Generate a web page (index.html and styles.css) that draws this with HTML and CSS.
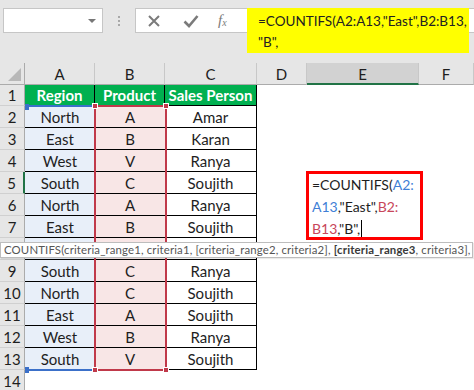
FILE: index.html
```html
<!DOCTYPE html>
<html>
<head>
<meta charset="utf-8">
<link rel="stylesheet" href="styles.css">
</head>
<body>
<div class="app">
  <div class="toolbar">
    <div class="namebox"><span class="caret"></span></div>
    <div class="dots"><i></i><i></i><i></i></div>
    <div class="fbar">
      <div class="ficons">
        <svg class="ico" width="14" height="14" viewBox="0 0 14 14"><path d="M2 2 L12 12 M12 2 L2 12" stroke="#7b7b7b" stroke-width="2" fill="none"/></svg>
        <svg class="ico" width="16" height="14" viewBox="0 0 16 14"><path d="M1.5 7.5 L6 12 L14.5 2" stroke="#7b7b7b" stroke-width="2.6" fill="none"/></svg>
        <span class="fx">f<sub>x</sub></span>
      </div>
      <div class="formula">=COUNTIFS(A2:A13,"East",B2:B13,<br>"B",</div>
    </div>
  </div>

  <div class="sheet">
    <div class="grid">
      <div class="corner"><span class="tri"></span></div>
      <div class="ch">A</div><div class="ch">B</div><div class="ch">C</div><div class="ch">D</div><div class="ch sel">E</div><div class="ch">F</div>

      <div class="rh">1</div><div class="hd">Region</div><div class="hd">Product</div><div class="hd last">Sales Person</div><div class="e"></div><div class="e"></div><div class="e"></div>
      <div class="rh">2</div><div class="c ca">North</div><div class="c cb">A</div><div class="c cc">Amar</div><div class="e"></div><div class="e"></div><div class="e"></div>
      <div class="rh">3</div><div class="c ca">East</div><div class="c cb">B</div><div class="c cc">Karan</div><div class="e"></div><div class="e"></div><div class="e"></div>
      <div class="rh">4</div><div class="c ca">West</div><div class="c cb">V</div><div class="c cc">Ranya</div><div class="e"></div><div class="e"></div><div class="e"></div>
      <div class="rh act">5</div><div class="c ca">South</div><div class="c cb">C</div><div class="c cc">Soujith</div><div class="e"></div><div class="e"></div><div class="e"></div>
      <div class="rh">6</div><div class="c ca">North</div><div class="c cb">A</div><div class="c cc">Ranya</div><div class="e"></div><div class="e"></div><div class="e"></div>
      <div class="rh">7</div><div class="c ca">East</div><div class="c cb">B</div><div class="c cc">Soujith</div><div class="e"></div><div class="e"></div><div class="e"></div>
      <div class="rh"></div><div class="c ca"></div><div class="c cb"></div><div class="c cc"></div><div class="e"></div><div class="e"></div><div class="e"></div>
      <div class="rh">9</div><div class="c ca">South</div><div class="c cb">C</div><div class="c cc">Ranya</div><div class="e"></div><div class="e"></div><div class="e"></div>
      <div class="rh">10</div><div class="c ca">North</div><div class="c cb">C</div><div class="c cc">Soujith</div><div class="e"></div><div class="e"></div><div class="e"></div>
      <div class="rh">11</div><div class="c ca">East</div><div class="c cb">A</div><div class="c cc">Soujith</div><div class="e"></div><div class="e"></div><div class="e"></div>
      <div class="rh">12</div><div class="c ca">West</div><div class="c cb">B</div><div class="c cc">Ranya</div><div class="e"></div><div class="e"></div><div class="e"></div>
      <div class="rh">13</div><div class="c ca">South</div><div class="c cb">V</div><div class="c cc">Soujith</div><div class="e"></div><div class="e"></div><div class="e"></div>
      <div class="rh">14</div><div class="e"></div><div class="e"></div><div class="e"></div><div class="e"></div><div class="e"></div><div class="e"></div>
    </div>

    <div class="range-a"><span class="h h-tl"></span><span class="h h-bl"></span></div>
    <div class="range-b"><span class="h h-tl"></span><span class="h h-tr"></span><span class="h h-bl"></span><span class="h h-br"></span></div>

    <div class="editor">=COUNTIFS(<span class="ref-a">A2:</span><br><span class="ref-a">A13</span>,"East",<span class="ref-b">B2:</span><br><span class="ref-b">B13</span>,"B",<span class="cursor"></span></div>

    <div class="tip">COUNTIFS(criteria_range1, criteria1, [criteria_range2, criteria2], <b>[criteria_range3</b>, criteria3],</div>
  </div>
</div>
</body>
</html>
```

FILE: styles.css
```css
* { box-sizing: border-box; }
html, body { margin: 0; padding: 0; }
body {
  width: 474px;
  height: 390px;
  overflow: hidden;
  background: #fff;
  font-family: Lato, "Open Sans", sans-serif;
}
.app { width: 474px; height: 390px; overflow: hidden; }

.toolbar {
  height: 63px;
  background: #e6e6e6;
  display: flex;
  align-items: flex-start;
  padding-top: 8px;
  padding-left: 3px;
}
.namebox {
  width: 100px;
  height: 25px;
  background: #fff;
  border: 1px solid #c6c6c6;
  position: relative;
}
.caret {
  position: absolute;
  right: 6px;
  top: 10px;
  width: 0; height: 0;
  border-left: 4px solid transparent;
  border-right: 4px solid transparent;
  border-top: 4px solid #777;
}
.dots {
  width: 32px;
  height: 25px;
  display: flex;
  flex-direction: column;
  align-items: center;
  justify-content: center;
  gap: 2px;
}
.dots i {
  display: block;
  width: 2px; height: 2px;
  background: #a8a8a8;
}
.fbar {
  flex: 1;
  height: 25px;
  background: #fff;
  border: 1px solid #c6c6c6;
  border-right: none;
  display: flex;
  align-items: flex-start;
}
.ficons {
  width: 111px;
  height: 23px;
  display: flex;
  align-items: center;
  padding-left: 11px;
}
.ico { display: block; }
.ficons .ico:nth-child(1) { margin-right: 22px; }
.ficons .ico:nth-child(2) { margin-right: 19px; }
.fx {
  font-family: "Liberation Serif", "DejaVu Serif", serif;
  font-style: italic;
  color: #7b7b7b;
  font-size: 15px;
  line-height: 1;
}
.fx sub { font-size: 10px; vertical-align: -1px; }
.formula {
  width: 222px;
  height: 45px;
  margin-top: -1px;
  background: #ffff00;
  padding: 3px 0 0 11px;
  font-size: 13.5px;
  line-height: 21px;
  color: #222;
  white-space: nowrap;
}

.sheet { position: relative; }
.grid {
  display: grid;
  grid-template-columns: 25px 70px 70px 92px 50px 112px 1fr;
  grid-template-rows: 22px 21px repeat(13, 22px);
}
.grid > div {
  display: flex;
  align-items: center;
  justify-content: center;
  font-size: 15px;
  color: #1e1e1e;
  white-space: nowrap;
}
.corner {
  background: #e6e6e6;
  border-right: 1px solid #ababab;
  border-bottom: 1px solid #ababab;
  position: relative;
}
.tri {
  position: absolute;
  right: 3px;
  bottom: 3px;
  width: 0; height: 0;
  border-left: 13px solid transparent;
  border-bottom: 13px solid #b8b8b8;
}
.ch {
  background: #e6e6e6;
  border-right: 1px solid #c8c8c8;
  border-bottom: 1px solid #ababab;
  padding-top: 1px;
}
.ch.sel {
  background: #d2d2d2;
  border-bottom: 2px solid #217346;
}
.rh {
  background: #e6e6e6;
  border-right: 1px solid #ababab;
  border-bottom: 1px solid #d0d0d0;
}
.rh.act { border-right: 2px solid #217346; }
.hd {
  background: #00b050;
  color: #fff !important;
  font-weight: 700;
  border-right: 1px solid #000;
  border-bottom: 1px solid #000;
}
.c {
  border-bottom: 1px solid #000;
}
.ca { background: #e8eff9; }
.cb { background: #f8e6e6; }
.cc { background: #fff; border-right: 1px solid #000; }
.e { background: #fff; }

.range-a {
  position: absolute;
  left: 25px;
  top: 42px;
  width: 70px;
  height: 266px;
  border-top: 2px solid #3b70c9;
  border-bottom: 2px solid #3b70c9;
}
.range-b {
  position: absolute;
  left: 94px;
  top: 42px;
  width: 73px;
  height: 266px;
  border: 2px solid #c0394a;
}
.h {
  position: absolute;
  width: 6px;
  height: 6px;
  background: #c0394a;
  border: 1px solid #fff;
}
.range-a .h { background: #3b70c9; width: 4px; border: none; }
.range-a .h-tl { left: 0; top: -3px; }
.range-a .h-bl { left: 0; bottom: -4px; }
.range-b .h-tl { left: -4px; top: -4px; }
.range-b .h-tr { right: -4px; top: -4px; }
.range-b .h-bl { left: -4px; bottom: -4px; }
.range-b .h-br { right: -4px; bottom: -4px; }

.editor {
  position: absolute;
  left: 306px;
  top: 108px;
  width: 117px;
  height: 69px;
  border: 3px solid #ff0000;
  background: #fff;
  padding: 0 0 0 3px;
  font-size: 14px;
  line-height: 22px;
  color: #1e1e1e;
  white-space: nowrap;
}
.ref-a { color: #3f7fd6; }
.ref-b { color: #c8465a; }
.cursor {
  display: inline-block;
  width: 1px;
  height: 17px;
  background: #000;
  vertical-align: -3px;
  margin-left: 1px;
}

.tip {
  position: absolute;
  left: 0;
  top: 179px;
  width: 473px;
  height: 16px;
  background: #fff;
  border: 1px solid #bdbdbd;
  box-shadow: 1px 1px 1px rgba(0,0,0,0.08);
  padding-left: 3px;
  font-size: 11.4px;
  line-height: 14px;
  letter-spacing: 0.15px;
  color: #555;
  white-space: nowrap;
  overflow: hidden;
}
.tip b { color: #3a3a3a; }
```
